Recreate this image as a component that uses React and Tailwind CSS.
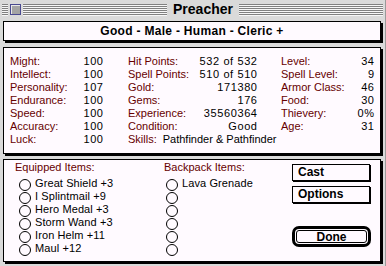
import React from "react";

const font = { fontFamily: '"Liberation Sans", Arial, sans-serif' };

const stats1 = [
  ["Might:", "100"],
  ["Intellect:", "100"],
  ["Personality:", "107"],
  ["Endurance:", "100"],
  ["Speed:", "100"],
  ["Accuracy:", "100"],
  ["Luck:", "100"],
];

const stats2 = [
  ["Hit Points:", "532 of 532"],
  ["Spell Points:", "510 of 510"],
  ["Gold:", "171380"],
  ["Gems:", "176"],
  ["Experience:", "35560364"],
  ["Condition:", "Good"],
];

const stats3 = [
  ["Level:", "34"],
  ["Spell Level:", "9"],
  ["Armor Class:", "46"],
  ["Food:", "30"],
  ["Thievery:", "0%"],
  ["Age:", "31"],
];

const equipped = [
  "Great Shield +3",
  "I Splintmail +9",
  "Hero Medal +3",
  "Storm Wand +3",
  "Iron Helm +11",
  "Maul +12",
];

const backpack = ["Lava Grenade", "", "", "", "", ""];

// striped title bar fill
function Stripes({ className }) {
  return (
    <div
      className={
        "h-[12px] bg-[image:repeating-linear-gradient(to_bottom,#808080_0px,#808080_1px,#f6f6f6_1px,#f6f6f6_2px)] " +
        className
      }
    />
  );
}

function StatRow({ label, value }) {
  return (
    <div className="flex justify-between h-[13px] leading-[13px]">
      <span className="text-[#660000]">{label}</span>
      <span className="text-black tracking-[0.6px] -mr-[0.6px]">{value}</span>
    </div>
  );
}

function ItemRow({ name }) {
  return (
    <div className="flex items-center h-[13px] leading-[13px]">
      <div className="w-[12px] h-[12px] rounded-full border border-black mt-[2px] shrink-0" />
      <span className="ml-[4px] text-black whitespace-nowrap tracking-[0.1px]">{name}</span>
    </div>
  );
}

export default function App() {
  return (
    <div
      className="w-[386px] h-[266px] bg-[#dadada] overflow-hidden text-[11px] border-r border-[#9a9a9a]"
      style={font}
    >
      {/* Title bar */}
      <div className="h-[19px] flex items-center px-[2px]">
        <Stripes className="w-[6px]" />
        <div className="mx-[2px] w-[11px] h-[11px] border border-[#4a4a90] bg-[#a4a4a4] shadow-[inset_1px_1px_0_#e8e8e8]" />
        <Stripes className="flex-1" />
        <span className="px-[6px] font-bold text-[14px] leading-[19px] text-black">
          Preacher
        </span>
        <Stripes className="flex-1" />
      </div>

      <div className="pl-[3px] flex flex-col">
        {/* Alignment */}
        <div className="mt-[2px] w-[378px] h-[20px] bg-[#fffaff] border border-black shadow-[2px_2px_0_#000] flex items-center justify-center font-bold text-[12px] tracking-[0.3px] text-black">
          Good - Male - Human - Cleric +
        </div>

        {/* Stats */}
        <div className="mt-[6px] w-[378px] h-[107px] bg-[#fffaff] border border-black shadow-[2px_2px_0_#000] flex pt-[7px] pl-[6px]">
          <div className="w-[93px] flex flex-col">
            {stats1.map(([l, v]) => (
              <StatRow key={l} label={l} value={v} />
            ))}
          </div>
          <div className="w-[129px] ml-[25px] flex flex-col">
            {stats2.map(([l, v]) => (
              <StatRow key={l} label={l} value={v} />
            ))}
            <div className="h-[13px] leading-[13px] whitespace-nowrap">
              <span className="text-[#660000]">Skills:</span>
              <span className="text-black ml-[6px]">Pathfinder &amp; Pathfinder</span>
            </div>
          </div>
          <div className="w-[93px] ml-[24px] flex flex-col">
            {stats3.map(([l, v]) => (
              <StatRow key={l} label={l} value={v} />
            ))}
          </div>
        </div>

        {/* Items */}
        <div className="mt-[5px] w-[378px] h-[103px] bg-[#fffaff] border border-black shadow-[2px_2px_0_#000] flex pl-[11px]">
          <div className="w-[149px] pt-[1px] flex flex-col">
            <div className="h-[13px] leading-[13px] text-[#660000]">Equipped Items:</div>
            <div className="mt-[3px] pl-[4px] flex flex-col">
              {equipped.map((n) => (
                <ItemRow key={n} name={n} />
              ))}
            </div>
          </div>
          <div className="w-[128px] pt-[1px] flex flex-col">
            <div className="h-[13px] leading-[13px] text-[#660000]">Backpack Items:</div>
            <div className="mt-[3px] pl-[2px] flex flex-col">
              {backpack.map((n, i) => (
                <ItemRow key={i} name={n} />
              ))}
            </div>
          </div>
          <div className="w-[79px] pt-[4px] flex flex-col">
            <div className="w-[78px] h-[17px] border border-black bg-[#fffaff] shadow-[1px_1px_0_#000] font-bold text-[12px] leading-[15px] pl-[5px] text-black">
              Cast
            </div>
            <div className="mt-[5px] w-[78px] h-[17px] border border-black bg-[#fffaff] shadow-[1px_1px_0_#000] font-bold text-[12px] leading-[15px] pl-[5px] text-black">
              Options
            </div>
            <div className="mt-[23px] w-[79px] h-[21px] border-[3px] border-black rounded-[7px] p-[1px]">
              <div className="w-full h-full border border-black rounded-[3px] flex items-center justify-center font-bold text-[12px] text-black">
                Done
              </div>
            </div>
          </div>
        </div>
      </div>
    </div>
  );
}
